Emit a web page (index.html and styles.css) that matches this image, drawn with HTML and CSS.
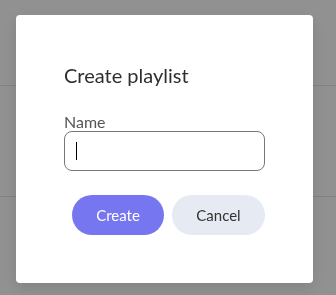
FILE: index.html
```html
<!DOCTYPE html>
<html lang="en">
<head>
  <meta charset="UTF-8" />
  <title>Create playlist</title>
  <meta name="viewport" content="width=device-width, initial-scale=1.0">
  <link rel="stylesheet" href="styles.css">
</head>
<body>
  <div class="page">
    <div class="row first"></div>
    <div class="row"></div>
    <div class="row"></div>
  </div>

  <div class="overlay">
    <div class="dialog">
      <h2 class="dialog-title">Create playlist</h2>
      <label class="field-label" for="playlist-name">Name</label>
      <div class="field">
        <span class="caret"></span>
      </div>
      <div class="actions">
        <button class="btn btn-primary">Create</button>
        <button class="btn btn-secondary">Cancel</button>
      </div>
    </div>
  </div>
</body>
</html>
```

FILE: styles.css
```css
body {
  font-family: Lato, 'Liberation Sans', sans-serif;
  margin: 0;
  background: #fff;
  color: #333;
  overflow: hidden;
}

.page {
  height: 295px;
}
.row {
  height: 110px;
  border-bottom: 1px solid #e6e6e6;
}
.row.first {
  height: 85px;
}

.overlay {
  position: fixed;
  inset: 0;
  background: rgba(0, 0, 0, 0.43);
  padding: 15px 23px 12px 16px;
  display: flex;
  align-items: flex-start;
}

.dialog {
  width: 297px;
  box-sizing: border-box;
  background: #fff;
  border-radius: 4px;
  padding: 48px;
  box-shadow: 0 4px 16px rgba(0, 0, 0, 0.12);
  display: flex;
  flex-direction: column;
}

.dialog-title {
  margin: 0 0 25px;
  font-size: 20px;
  font-weight: 400;
  line-height: 24px;
  color: #2f2f2f;
}

.field-label {
  font-size: 16px;
  line-height: 19px;
  color: #555;
}

.field {
  height: 40px;
  box-sizing: border-box;
  border: 1px solid #777;
  border-radius: 8px;
  display: flex;
  align-items: center;
  padding-left: 11px;
}
.caret {
  width: 1px;
  height: 18px;
  background: #000;
}

.actions {
  margin-top: 24px;
  display: flex;
  justify-content: flex-end;
  gap: 8px;
}

.btn {
  height: 40px;
  border: none;
  border-radius: 20px;
  font-family: inherit;
  font-size: 15px;
  cursor: pointer;
}
.btn-primary {
  width: 92px;
  background: #7676f0;
  color: #fff;
}
.btn-secondary {
  width: 93px;
  background: #e6eaf3;
  color: #333;
}
```
